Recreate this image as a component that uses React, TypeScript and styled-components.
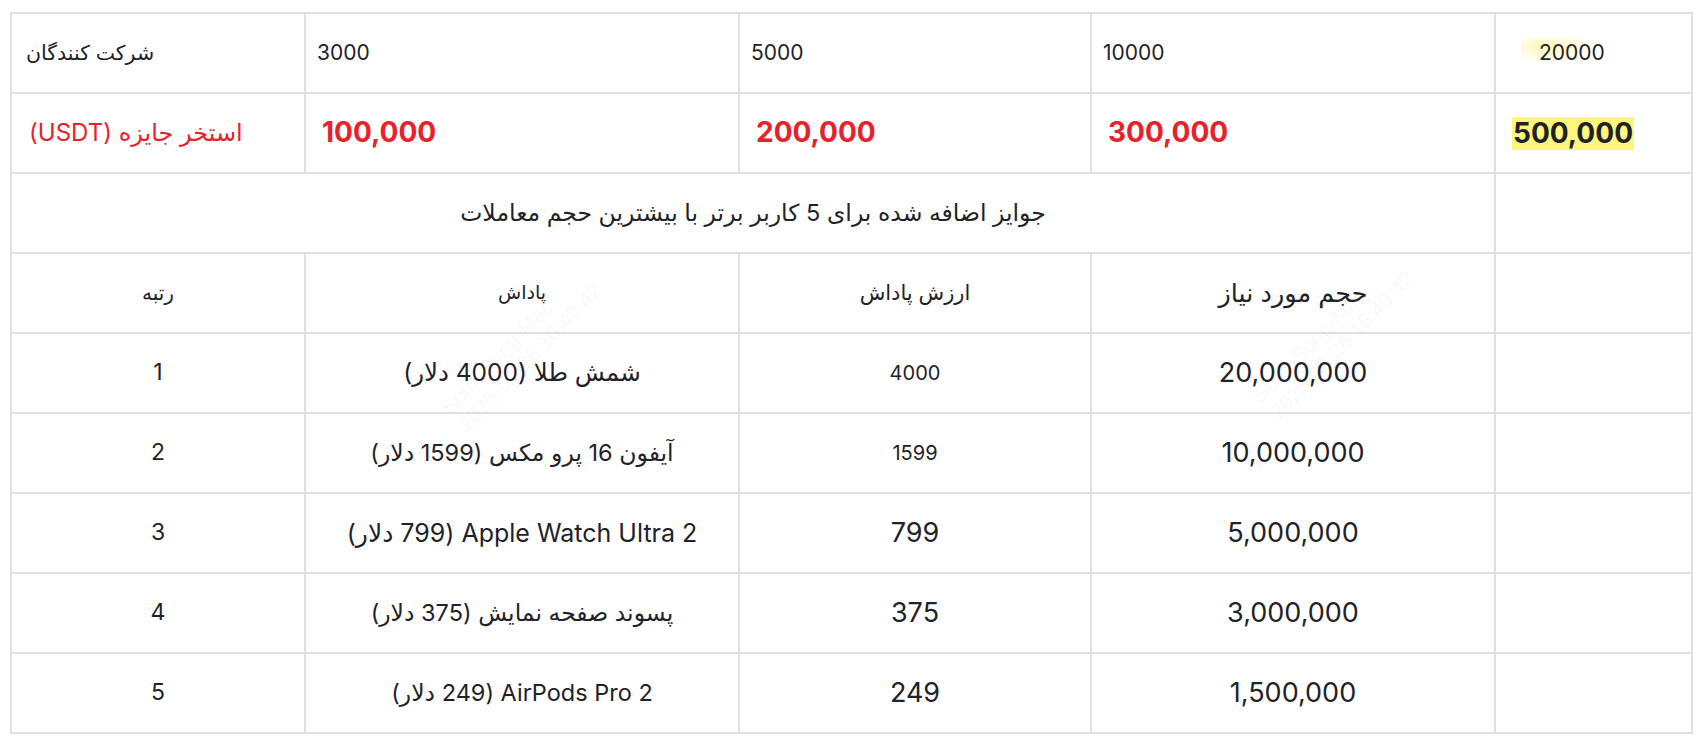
import React from 'react';
import styled, {createGlobalStyle} from 'styled-components';

const GlobalStyle = createGlobalStyle`
    html, body {
        margin: 0;
        padding: 0;
        background: #ffffff;
    }
    body {
        font-family: Inter, "DejaVu Sans", sans-serif;
        color: #1f2329;
    }
`;

const Page = styled.div`
    position: relative;
    padding: 12px 9px 6px 10px;
`;

const Grid = styled.div`
    display: grid;
    grid-template-columns: 294px 434px 352px 404px 197px;
    grid-auto-rows: 80px;
    width: 1683px;
    box-sizing: border-box;
    border-top: 2px solid #dfe0e4;
    border-left: 2px solid #dfe0e4;
`;

const Cell = styled.div<{$center?: boolean; $pad?: number; $span?: number}>`
    display: flex;
    align-items: center;
    justify-content: ${p => (p.$center ? 'center' : 'flex-start')};
    padding-left: ${p => (p.$center ? 0 : p.$pad ?? 14)}px;
    grid-column: span ${p => p.$span ?? 1};
    box-sizing: border-box;
    border-right: 2px solid #dfe0e4;
    border-bottom: 2px solid #dfe0e4;
    overflow: hidden;
    white-space: nowrap;
`;

const Txt = styled.span<{$size: number; $bold?: boolean; $red?: boolean}>`
    font-size: ${p => p.$size}px;
    font-weight: ${p => (p.$bold ? 700 : 400)};
    color: ${p => (p.$red ? '#e8212b' : '#1f2329')};
    line-height: 1.2;
`;

const Marked = styled.span`
    font-size: 28px;
    font-weight: 700;
    line-height: 33px;
    padding: 0 1px;
    background: #fff67c;
    color: #1f2329;
`;

const Glow = styled.span`
    font-size: 21px;
    line-height: 1.2;
    padding: 2px 6px 2px 18px;
    margin-left: -18px;
    background: radial-gradient(ellipse at 30% 30%, rgba(255, 240, 90, 0.45), rgba(255, 255, 255, 0) 55%);
`;

const Watermark = styled.div<{$x: number; $y: number}>`
    position: absolute;
    left: ${p => p.$x}px;
    top: ${p => p.$y}px;
    transform: rotate(-46deg);
    transform-origin: center;
    font-family: "Liberation Sans", sans-serif;
    font-size: 21px;
    line-height: 24px;
    color: rgba(31, 35, 41, 0.045);
    pointer-events: none;
    white-space: nowrap;
`;

const counts = ['3000', '5000', '10000'];
const pools = ['100,000', '200,000', '300,000'];

const prizes = [
    {rank: '1', reward: 'شمش طلا (4000 دلار)', size: 24.5, value: '4000', small: true, volume: '20,000,000'},
    {rank: '2', reward: 'آیفون 16 پرو مکس (1599 دلار)', size: 23.5, value: '1599', small: true, volume: '10,000,000'},
    {rank: '3', reward: 'Apple Watch Ultra 2 (799 دلار)', size: 25, value: '799', small: false, volume: '5,000,000'},
    {rank: '4', reward: 'پسوند صفحه نمایش (375 دلار)', size: 23.5, value: '375', small: false, volume: '3,000,000'},
    {rank: '5', reward: 'AirPods Pro 2 (249 دلار)', size: 23.5, value: '249', small: false, volume: '1,500,000'},
];

export default function App() {
    return (
        <Page>
            <GlobalStyle/>
            <Grid>
                <Cell $pad={14}><Txt $size={20.5} dir='rtl'>شرکت کنندگان</Txt></Cell>
                {counts.map(c => (
                    <Cell key={c} $pad={11}><Txt $size={21}>{c}</Txt></Cell>
                ))}
                <Cell $pad={43}><Glow>20000</Glow></Cell>

                <Cell $pad={17}><Txt $size={24} $red dir='rtl'>استخر جایزه (USDT)</Txt></Cell>
                {pools.map(p => (
                    <Cell key={p} $pad={16}><Txt $size={28} $bold $red>{p}</Txt></Cell>
                ))}
                <Cell $pad={16}><Marked>500,000</Marked></Cell>

                <Cell $center $span={4}>
                    <Txt $size={23.5} dir='rtl'>جوایز اضافه شده برای 5 کاربر برتر با بیشترین حجم معاملات</Txt>
                </Cell>
                <Cell/>

                <Cell $center><Txt $size={20} dir='rtl'>رتبه</Txt></Cell>
                <Cell $center><Txt $size={19} dir='rtl'>پاداش</Txt></Cell>
                <Cell $center><Txt $size={21} dir='rtl'>ارزش پاداش</Txt></Cell>
                <Cell $center><Txt $size={25.5} dir='rtl'>حجم مورد نیاز</Txt></Cell>
                <Cell/>

                {prizes.map(row => (
                    <React.Fragment key={row.rank}>
                        <Cell $center><Txt $size={23}>{row.rank}</Txt></Cell>
                        <Cell $center><Txt $size={row.size} dir='rtl'>{row.reward}</Txt></Cell>
                        <Cell $center><Txt $size={row.small ? 20 : 27}>{row.value}</Txt></Cell>
                        <Cell $center><Txt $size={27}>{row.volume}</Txt></Cell>
                        <Cell/>
                    </React.Fragment>
                ))}
            </Grid>
            <Watermark $x={424} $y={325}>SoniaSong-Mac<br/>2025-02-26 16:40:42</Watermark>
            <Watermark $x={1236} $y={313}>SoniaSong-Mac<br/>2025-02-26 16:40:42</Watermark>
        </Page>
    );
}
